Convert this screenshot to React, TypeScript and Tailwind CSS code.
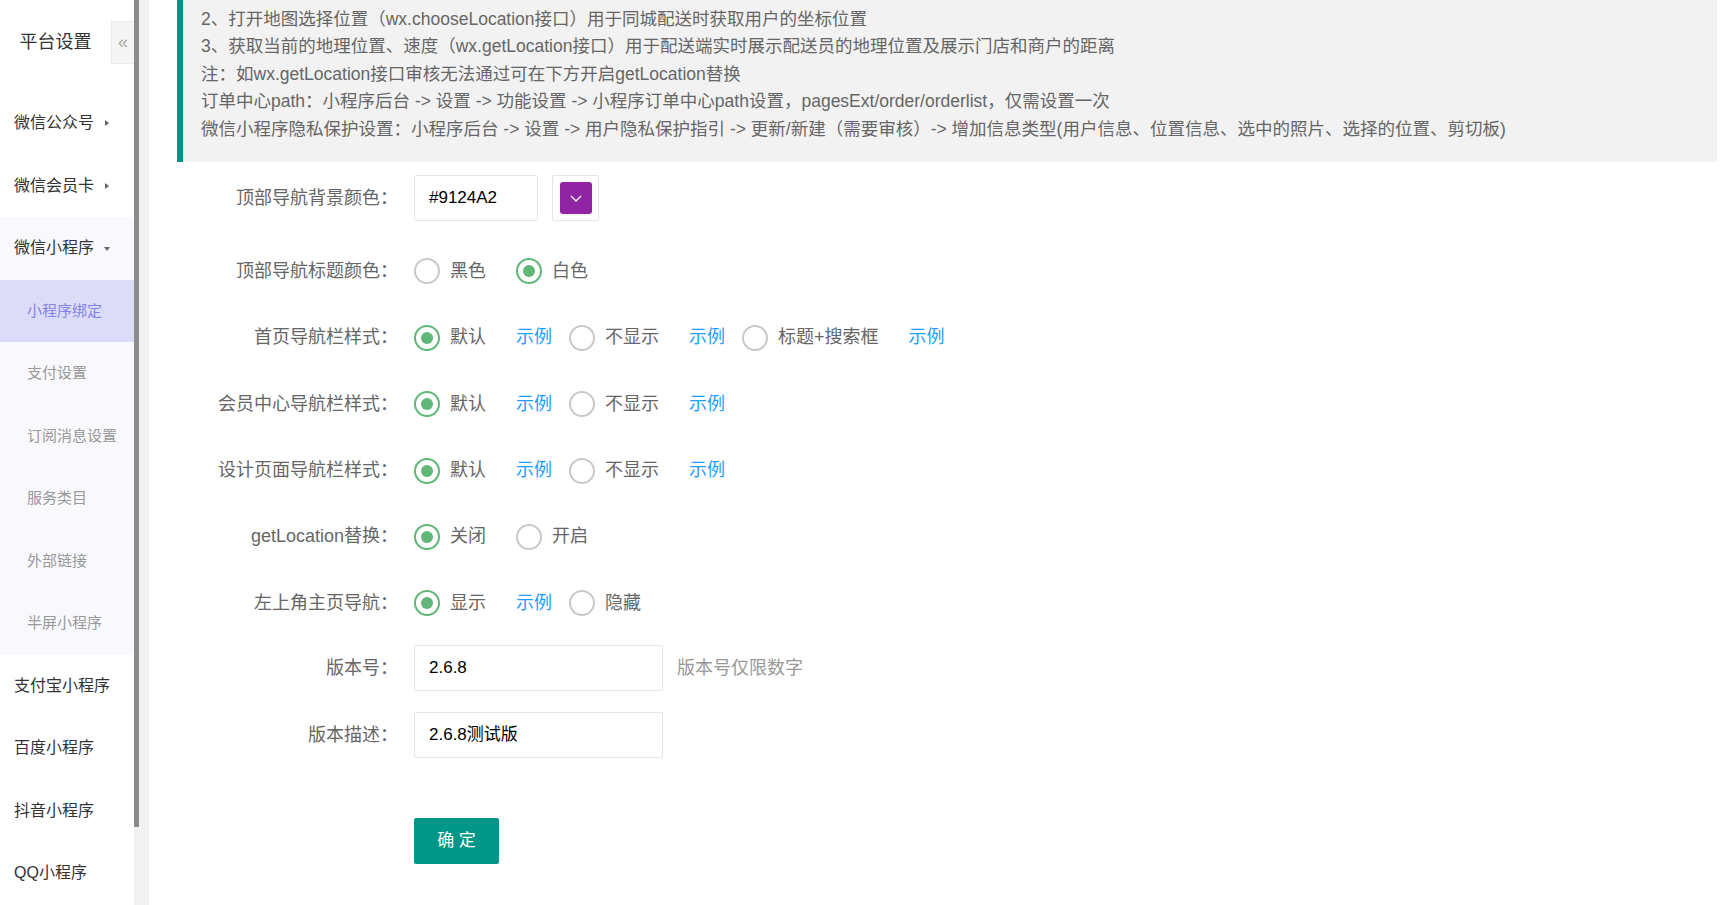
import React from "react";

type Opt = { label: string; checked?: boolean; demo?: boolean };

function Radio({ label, checked }: { label: string; checked?: boolean }) {
  return (
    <span className="inline-flex items-center mr-[30px]">
      <span
        className={`w-[26px] h-[26px] rounded-full border-2 flex items-center justify-center ${
          checked ? "border-[#5fb878]" : "border-[#c9c9c9]"
        }`}
      >
        {checked && <span className="w-[12px] h-[12px] rounded-full bg-[#5fb878]" />}
      </span>
      <span className="ml-[10px] text-[#666]">{label}</span>
    </span>
  );
}

function Row({ label, children, className = "" }: { label: string; children: React.ReactNode; className?: string }) {
  return (
    <div className={`flex items-center h-[46px] ${className}`}>
      <div className="w-[221px] text-right text-[#666] shrink-0">{label}</div>
      <div className="ml-[16px] flex items-center">{children}</div>
    </div>
  );
}

function RadioGroup({ options }: { options: Opt[] }) {
  return (
    <>
      {options.map((o) => (
        <React.Fragment key={o.label}>
          <Radio label={o.label} checked={o.checked} />
          {o.demo && <span className="text-[#1e9fff] mr-[17px] cursor-pointer">示例</span>}
        </React.Fragment>
      ))}
    </>
  );
}

const subMenu = ["小程序绑定", "支付设置", "订阅消息设置", "服务类目", "外部链接", "半屏小程序"];
const bottomMenu = ["支付宝小程序", "百度小程序", "抖音小程序", "QQ小程序"];

const notice = [
  "1、小程序位置相关接口需在小程序后台申请开通（开发管理 -> 接口设置）",
  "2、打开地图选择位置（wx.chooseLocation接口）用于同城配送时获取用户的坐标位置",
  "3、获取当前的地理位置、速度（wx.getLocation接口）用于配送端实时展示配送员的地理位置及展示门店和商户的距离",
  "注：如wx.getLocation接口审核无法通过可在下方开启getLocation替换",
  "订单中心path：小程序后台 -> 设置 -> 功能设置 -> 小程序订单中心path设置，pagesExt/order/orderlist，仅需设置一次",
  "微信小程序隐私保护设置：小程序后台 -> 设置 -> 用户隐私保护指引 -> 更新/新建（需要审核）-> 增加信息类型(用户信息、位置信息、选中的照片、选择的位置、剪切板)",
];

export default function App() {
  return (
    <div className="flex h-[905px] w-[1720px] overflow-hidden bg-white font-['Liberation_Sans','Noto_Sans_CJK_SC',sans-serif]">
      {/* Sidebar */}
      <aside className="w-[134px] shrink-0 flex flex-col bg-white">
        <div className="h-[92px] flex items-start pt-[21px] shrink-0">
          <div className="w-[111px] h-[43px] flex items-center justify-center text-[18px] text-[#333]">平台设置</div>
          <div className="w-[23px] h-[43px] bg-[#f5f5f5] border border-[#ececec] border-r-0 flex items-center justify-center text-[18px] text-[#a8a8a8] leading-none pb-[2px]">
            «
          </div>
        </div>
        <div className="h-[62.5px] shrink-0 flex items-center pl-[14px] text-[16px] text-[#333]">
          微信公众号
          <span className="ml-[11px] w-0 h-0 border-l-[4px] border-l-[#666] border-y-[3px] border-y-transparent" />
        </div>
        <div className="h-[62.5px] shrink-0 flex items-center pl-[14px] text-[16px] text-[#333]">
          微信会员卡
          <span className="ml-[11px] w-0 h-0 border-l-[4px] border-l-[#666] border-y-[3px] border-y-transparent" />
        </div>
        <div className="h-[62.5px] shrink-0 flex items-center pl-[14px] text-[16px] text-[#333] bg-[#f8f8fd]">
          微信小程序
          <span className="ml-[10px] mt-[2px] w-0 h-0 border-t-[4px] border-t-[#666] border-x-[3px] border-x-transparent" />
        </div>
        <div className="bg-[#f8f8fd] shrink-0">
          {subMenu.map((s, i) => (
            <div
              key={s}
              className={`h-[62.5px] flex items-center pl-[27px] text-[15px] ${
                i === 0 ? "bg-[#dcdcf8] text-[#8484e6]" : "text-[#999]"
              }`}
            >
              {s}
            </div>
          ))}
        </div>
        {bottomMenu.map((s) => (
          <div key={s} className="h-[62.5px] shrink-0 flex items-center pl-[14px] text-[16px] text-[#333]">
            {s}
          </div>
        ))}
      </aside>

      {/* sidebar scrollbar */}
      <div className="w-[5px] shrink-0 flex flex-col">
        <div className="h-[827px] bg-[#8c8c8c]" />
        <div className="flex-1 bg-[#f1f1f1]" />
      </div>
      <div className="w-[10px] shrink-0 bg-[#f2f2f2]" />

      {/* Main */}
      <main className="flex-1 min-w-0 pl-[28px] pr-[3px] overflow-hidden">
        <div className="-mt-[37px] bg-[#f2f2f2] border-l-[6px] border-[#009688] pt-[15px] pb-[19px] pl-[18px] pr-[15px] text-[17.5px] leading-[27.5px] text-[#666]">
          {notice.map((n) => (
            <p key={n} className="whitespace-nowrap">{n}</p>
          ))}
        </div>

        <div className="mt-[13px] text-[18px]">
          <Row label="顶部导航背景颜色：">
            <div className="w-[124px] h-[46px] border border-[#e6e6e6] rounded-[2px] flex items-center pl-[14px] text-[17px] text-black">
              #9124A2
            </div>
            <div className="ml-[14px] w-[47px] h-[46px] border border-[#e6e6e6] rounded-[2px] flex items-center justify-center">
              <div className="w-[32px] h-[32px] rounded-[3px] bg-[#9124A2] flex items-center justify-center">
                <svg width="14" height="14" viewBox="0 0 14 14" fill="none">
                  <polyline points="2,5 7,10 12,5" stroke="#fff" strokeWidth="1.3" />
                </svg>
              </div>
            </div>
          </Row>

          <Row label="顶部导航标题颜色：" className="mt-[27px]">
            <RadioGroup options={[{ label: "黑色" }, { label: "白色", checked: true }]} />
          </Row>

          <Row label="首页导航栏样式：" className="mt-[20.5px]">
            <RadioGroup
              options={[
                { label: "默认", checked: true, demo: true },
                { label: "不显示", demo: true },
                { label: "标题+搜索框", demo: true },
              ]}
            />
          </Row>

          <Row label="会员中心导航栏样式：" className="mt-[20.5px]">
            <RadioGroup
              options={[
                { label: "默认", checked: true, demo: true },
                { label: "不显示", demo: true },
              ]}
            />
          </Row>

          <Row label="设计页面导航栏样式：" className="mt-[20.5px]">
            <RadioGroup
              options={[
                { label: "默认", checked: true, demo: true },
                { label: "不显示", demo: true },
              ]}
            />
          </Row>

          <Row label="getLocation替换：" className="mt-[20px]">
            <RadioGroup options={[{ label: "关闭", checked: true }, { label: "开启" }]} />
          </Row>

          <Row label="左上角主页导航：" className="mt-[20.5px]">
            <RadioGroup options={[{ label: "显示", checked: true, demo: true }, { label: "隐藏" }]} />
          </Row>

          <Row label="版本号：" className="mt-[19px]">
            <div className="w-[249px] h-[46px] border border-[#e6e6e6] rounded-[2px] flex items-center pl-[14px] text-[17px] text-black">
              2.6.8
            </div>
            <span className="ml-[14px] text-[#999]">版本号仅限数字</span>
          </Row>

          <Row label="版本描述：" className="mt-[21px]">
            <div className="w-[249px] h-[46px] border border-[#e6e6e6] rounded-[2px] flex items-center pl-[14px] text-[17px] text-black">
              2.6.8测试版
            </div>
          </Row>

          <div className="mt-[60px] ml-[237px]">
            <button className="w-[85px] h-[46px] rounded-[2px] bg-[#009688] text-white text-[17px]">确 定</button>
          </div>
        </div>
      </main>
    </div>
  );
}
